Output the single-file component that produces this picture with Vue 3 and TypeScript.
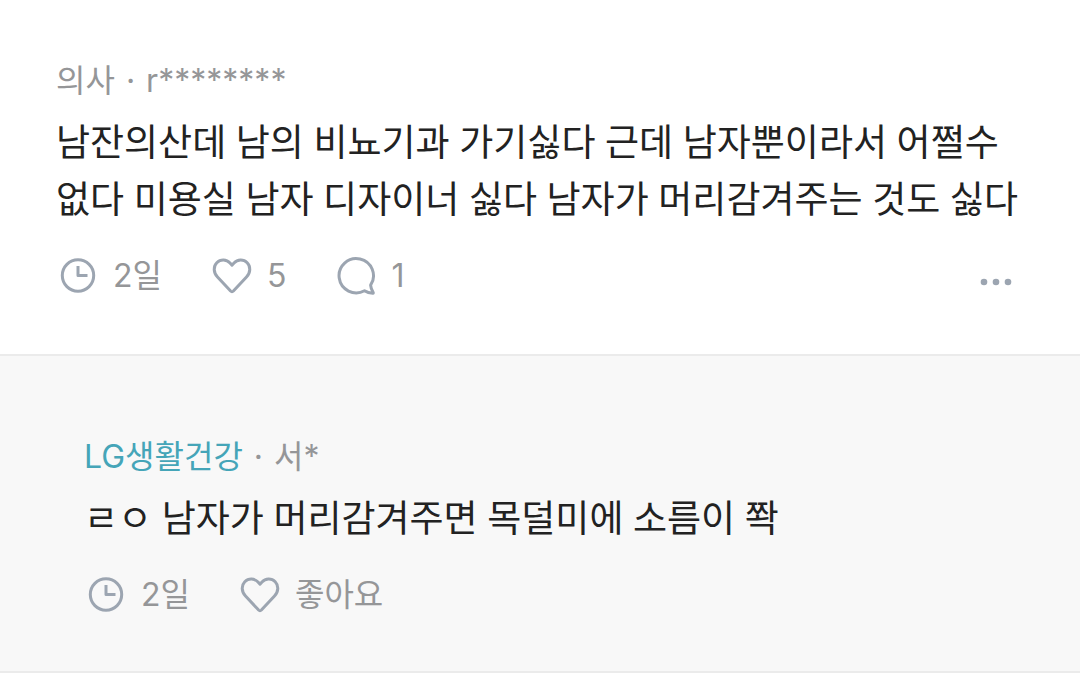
<script setup lang="ts">
interface Comment {
  id: number
  company: string
  user: string
  highlighted: boolean
  reply: boolean
  body: string
  time: string
  likes: string
  replies: string | null
}

const comments: Comment[] = [
  {
    id: 1,
    company: '의사',
    user: 'r********',
    highlighted: false,
    reply: false,
    body: '남잔의산데 남의 비뇨기과 가기싫다 근데 남자뿐이라서 어쩔수없다 미용실 남자 디자이너 싫다 남자가 머리감겨주는 것도 싫다',
    time: '2일',
    likes: '5',
    replies: '1',
  },
  {
    id: 2,
    company: 'LG생활건강',
    user: '서*',
    highlighted: true,
    reply: true,
    body: 'ㄹㅇ 남자가 머리감겨주면 목덜미에 소름이 쫙',
    time: '2일',
    likes: '좋아요',
    replies: null,
  },
]
</script>

<template>
  <main class="thread">
    <article v-for="c in comments" :key="c.id" class="comment" :class="{ reply: c.reply }">
      <header class="author">
        <span :class="{ company: c.highlighted }">{{ c.company }}</span>
        <span>·</span>
        <span>{{ c.user }}</span>
      </header>
      <p class="body">{{ c.body }}</p>
      <footer class="meta">
        <span class="item">
          <svg class="icon" viewBox="0 0 40 40" aria-hidden="true">
            <circle cx="20" cy="19.500" r="15.700" />
            <path d="M20 10V19.500H29.500" />
          </svg>
          <time>{{ c.time }}</time>
        </span>
        <button type="button" class="item">
          <svg class="icon" viewBox="0 0 40 40" aria-hidden="true">
            <path d="M18.600 35L5.500 21C1.300 16.500 1.200 10.500 4.800 6.800C8.600 2.900 14.500 3.300 18 7L20 9.100L22 7C25.500 3.300 31.400 2.900 35.200 6.800C38.800 10.500 38.700 16.500 34.500 21L21.400 35Q20 36.400 18.600 35Z" />
          </svg>
          <span>{{ c.likes }}</span>
        </button>
        <button v-if="c.replies" type="button" class="item">
          <svg class="icon" viewBox="0 0 40 40" aria-hidden="true">
            <path d="M34.600 29.200A17.200 17.200 0 1 0 28.500 34.800Q32 37 36.800 37.300Q37.600 37.200 37.100 36.400Q34.900 33 34.600 29.200Z" />
          </svg>
          <span>{{ c.replies }}</span>
        </button>
        <button v-if="!c.reply" type="button" class="more" aria-label="더보기">
          <svg viewBox="0 0 32 8" aria-hidden="true">
            <circle cx="4" cy="4" r="3.300" />
            <circle cx="16" cy="4" r="3.300" />
            <circle cx="28" cy="4" r="3.300" />
          </svg>
        </button>
      </footer>
    </article>
  </main>
</template>

<style>
body {
  margin: 0;
  background: #fff;
}
</style>

<style scoped>
.thread {
  font-family: Inter, "Noto Sans CJK KR", sans-serif;
  color: #222;
}
.comment {
  padding: 57px 56px 54px;
  border-bottom: 2px solid #ebebeb;
}
.reply {
  padding: 77px 56px 52px 84px;
  background: #f8f8f8;
}
.author {
  display: flex;
  gap: 11px;
  font-size: 32px;
  line-height: 48px;
  color: #959698;
}
.company {
  color: #45a5b8;
}
.body {
  margin: 8px 0 0;
  font-family: "Open Sans", "Noto Sans CJK KR", sans-serif;
  font-size: 37px;
  line-height: 57px;
  word-break: break-all;
}
.meta {
  display: flex;
  align-items: center;
  margin-top: 25px;
  padding-left: 2px;
  height: 48px;
  font-size: 32px;
  line-height: 48px;
  color: #959698;
}
.item {
  display: flex;
  align-items: center;
  gap: 15px;
  margin-right: 50px;
}
button {
  padding: 0;
  border: 0;
  background: none;
  font: inherit;
  color: inherit;
  cursor: pointer;
}
.icon {
  width: 40px;
  height: 40px;
  fill: none;
  stroke: #9ca5b1;
  stroke-width: 3;
  stroke-linejoin: round;
}
.more {
  margin: 12px 12px 0 auto;
}
.more svg {
  display: block;
  width: 32px;
  height: 8px;
  fill: #9ca5b1;
}
</style>
